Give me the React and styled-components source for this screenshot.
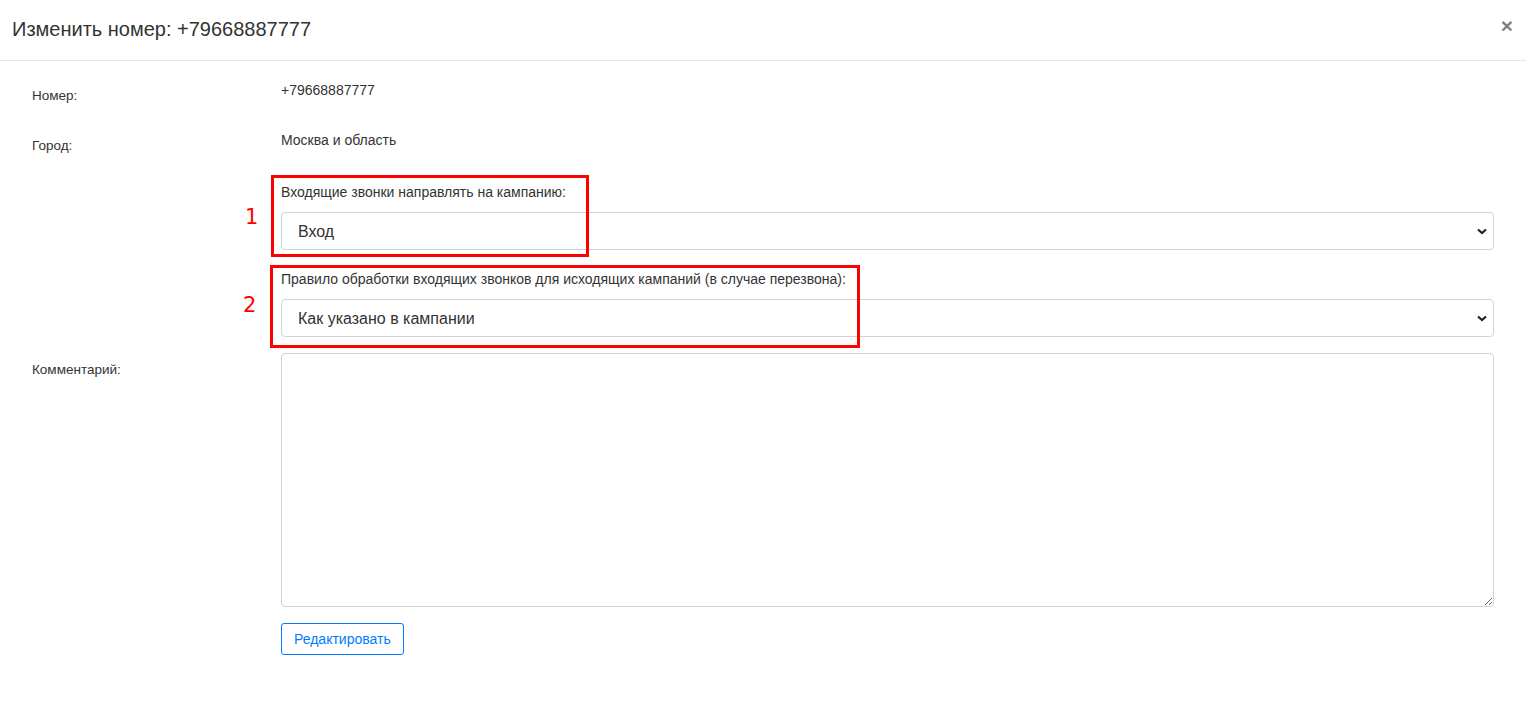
import React from "react";
import styled, { createGlobalStyle } from "styled-components";

const GlobalStyle = createGlobalStyle`
  body {
    margin: 0;
    background: #fff;
    font-family: "Liberation Sans", Arial, sans-serif;
    color: #333;
  }
`;

const Modal = styled.div`
  width: 1526px;
  min-height: 702px;
  background: #fff;
`;

const Header = styled.div`
  height: 61px;
  border-bottom: 1px solid #e5e5e5;
  display: flex;
  align-items: center;
  justify-content: space-between;
  padding: 0 12px;
  box-sizing: border-box;
`;

const Title = styled.h4`
  margin: 0;
  font-size: 20px;
  font-weight: 400;
  color: #333;
  line-height: 1.1;
  padding-bottom: 2px;
`;

const Close = styled.button`
  border: none;
  background: none;
  padding: 0;
  margin-right: 1px;
  font-family: "Liberation Sans", Arial, sans-serif;
  font-size: 21px;
  font-weight: 700;
  line-height: 1;
  color: #000;
  opacity: 0.5;
  cursor: pointer;
  margin-bottom: 10px;
`;

const Body = styled.div`
  padding: 18px 32px 40px 32px;
`;

const Row = styled.div`
  display: grid;
  grid-template-columns: 249px 1fr;
  min-height: ${(p) => p.$h || 0}px;
  padding-top: ${(p) => p.$pt || 0}px;
  box-sizing: border-box;
`;

const Label = styled.div`
  font-size: 13.5px;
  line-height: 20px;
  padding-top: ${(p) => p.$pt ?? 6}px;
  color: #333;
`;

const Value = styled.div`
  font-size: 14px;
  line-height: 20px;
  color: #333;
`;

const Group = styled.div`
  position: relative;
  margin-top: ${(p) => p.$mt || 0}px;
`;

const GroupLabel = styled.div`
  font-size: 14px;
  line-height: 20px;
  color: #333;
  margin-bottom: 10px;
`;

const Select = styled.select`
  display: block;
  width: 100%;
  height: 38px;
  box-sizing: border-box;
  border: 1px solid #ced4da;
  border-radius: 4px;
  padding: 0 30px 0 16px;
  font-family: "Liberation Sans", Arial, sans-serif;
  font-size: 16px;
  color: #333;
  appearance: none;
  background: #fff
    url("data:image/svg+xml,%3Csvg xmlns='http://www.w3.org/2000/svg' width='10' height='7' viewBox='0 0 10 7'%3E%3Cpath d='M1 1.5l4 3.5 4-3.5' fill='none' stroke='%23222' stroke-width='2.2'/%3E%3C/svg%3E")
    no-repeat right 6px center;
`;

const TextArea = styled.textarea`
  display: block;
  width: 100%;
  height: 254px;
  box-sizing: border-box;
  border: 1px solid #ced4da;
  border-radius: 4px;
  font-family: "Liberation Sans", Arial, sans-serif;
  font-size: 14px;
  margin-top: 16px;
`;

const Button = styled.button`
  margin-top: 16px;
  height: 32px;
  padding: 0 12px;
  border: 1px solid #007bff;
  border-radius: 3px;
  background: #fff;
  color: #007bff;
  font-family: "Liberation Sans", Arial, sans-serif;
  font-size: 14px;
  cursor: pointer;
`;

const Frame = styled.div`
  position: absolute;
  left: ${(p) => p.$l}px;
  top: ${(p) => p.$t}px;
  width: ${(p) => p.$w}px;
  height: ${(p) => p.$h}px;
  border: 3px solid #ff0000;
  box-sizing: border-box;
  pointer-events: none;
`;

const Mark = styled.span`
  position: absolute;
  left: ${(p) => p.$l}px;
  top: ${(p) => p.$t}px;
  font-family: "DejaVu Sans", sans-serif;
  font-size: 21px;
  line-height: 24px;
  color: #ff0000;
`;

export default function App() {
  return (
    <Modal>
      <GlobalStyle />
      <Header>
        <Title>Изменить номер: +79668887777</Title>
        <Close>×</Close>
      </Header>
      <Body>
        <Row $h={51} $pt={1}>
          <Label>Номер:</Label>
          <Value>+79668887777</Value>
        </Row>
        <Row $h={52}>
          <Label>Город:</Label>
          <Value>Москва и область</Value>
        </Row>
        <Row>
          <div />
          <div>
            <Group>
              <GroupLabel>Входящие звонки направлять на кампанию:</GroupLabel>
              <Select defaultValue="in">
                <option value="in">Вход</option>
              </Select>
              <Frame $l={-10} $t={-7} $w={318} $h={82} />
              <Mark $l={-36} $t={23}>1</Mark>
            </Group>
            <Group $mt={19}>
              <GroupLabel>
                Правило обработки входящих звонков для исходящих кампаний (в случае перезвона):
              </GroupLabel>
              <Select defaultValue="camp">
                <option value="camp">Как указано в кампании</option>
              </Select>
              <Frame $l={-11} $t={-4} $w={590} $h={83} />
              <Mark $l={-38} $t={24}>2</Mark>
            </Group>
          </div>
        </Row>
        <Row>
          <Label $pt={23}>Комментарий:</Label>
          <div>
            <TextArea />
            <Button>Редактировать</Button>
          </div>
        </Row>
      </Body>
    </Modal>
  );
}
